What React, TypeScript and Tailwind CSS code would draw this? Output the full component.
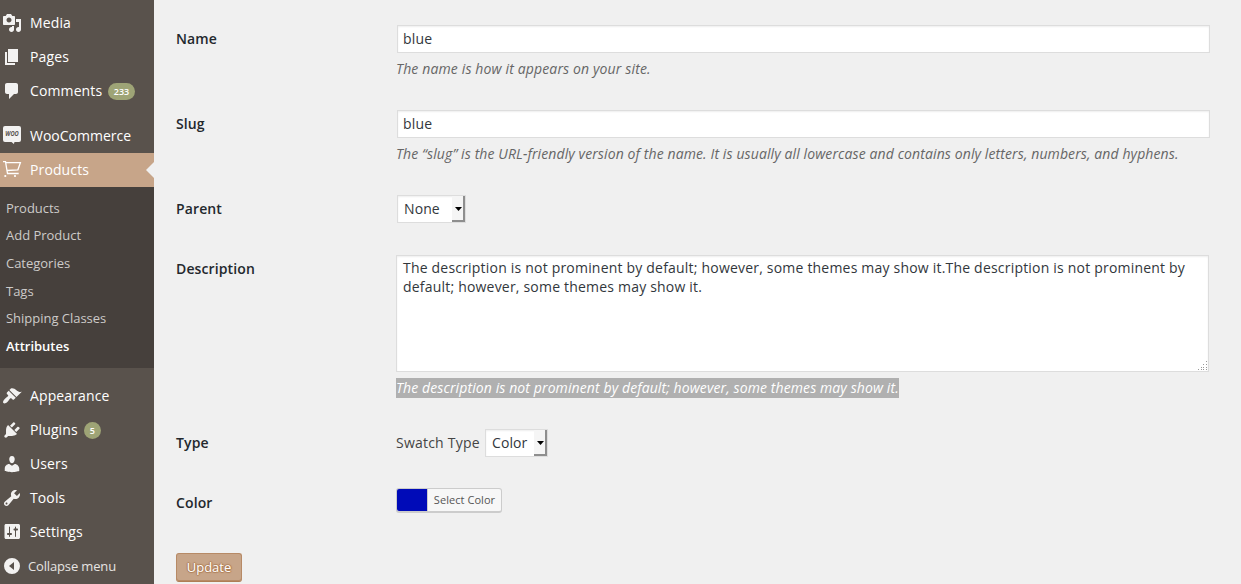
import React from "react";

const paths: Record<string, string> = {
  media:
    "M13 11V4c0-.55-.45-1-1-1h-1.67L9 1H5L3.67 3H2c-.55 0-1 .45-1 1v7c0 .55.45 1 1 1h10c.55 0 1-.45 1-1zM7 4.5c1.38 0 2.5 1.12 2.5 2.5S8.38 9.5 7 9.5 4.5 8.38 4.5 7 5.62 4.5 7 4.5zM14 6h5v10.5c0 1.38-1.12 2.5-2.5 2.5S14 17.88 14 16.5s1.12-2.5 2.5-2.5c.17 0 .34.02.5.05V9h-3V6zm-4 8.05V13h2v3.5c0 1.38-1.12 2.5-2.5 2.5S7 17.88 7 16.5 8.12 14 9.5 14c.17 0 .34.02.5.05z",
  pages: "M6 15V2h10v13H6zm-1 1h8v2H3V5h2v11z",
  comments:
    "M5 2h9c1.1 0 2 .9 2 2v7c0 1.1-.9 2-2 2h-2l-5 5v-5H5c-1.1 0-2-.9-2-2V4c0-1.1.9-2 2-2z",
  appearance:
    "M14.48 11.06L7.41 3.99l1.5-1.5c.5-.56 2.3-.47 3.51.32 1.21.8 1.43 1.28 2.91 2.1 1.18.64 2.45 1.26 4.45.85zm-.71.71L6.7 4.7 4.93 6.47c-.39.39-.39 1.02 0 1.41l1.06 1.06c.39.39.39 1.03 0 1.42-.6.6-1.43 1.11-2.21 1.69-.35.26-.7.53-1.01.84C1.43 14.23.4 16.08 1.4 17.07c.99 1 2.84-.03 4.18-1.36.31-.31.58-.66.85-1.02.57-.78 1.08-1.61 1.69-2.21.39-.39 1.02-.39 1.41 0l1.06 1.06c.39.39 1.02.39 1.41 0z",
  plugins:
    "M13.11 4.36L9.87 7.6 8 5.73l3.24-3.24c.35-.34 1.05-.2 1.56.32.52.51.66 1.21.31 1.55zm-8 1.77l.91-1.12 9.01 9.01-1.19.84c-.71.71-2.63 1.16-3.82 1.16H6.14L4.9 17.26c-.59.59-1.54.59-2.12 0-.59-.58-.59-1.53 0-2.12l1.24-1.24v-3.88c0-1.13.4-3.19 1.09-3.89zm7.26 3.97l3.24-3.24c.34-.35 1.04-.21 1.55.31.52.51.66 1.21.31 1.55l-3.24 3.25z",
  users:
    "M10 9.25c-2.27 0-2.73-3.44-2.73-3.44C7 4.02 7.82 2 9.97 2c2.16 0 2.98 2.02 2.71 3.81 0 0-.41 3.44-2.68 3.44zm0 2.57L12.72 10c2.39 0 4.52 2.33 4.52 4.53v2.49s-3.65 1.13-7.24 1.13c-3.65 0-7.24-1.13-7.24-1.13v-2.49c0-2.25 1.94-4.48 4.47-4.48z",
  tools:
    "M16.68 9.77c-1.34 1.34-3.3 1.67-4.95.99l-5.41 6.52c-.99.99-2.59.99-3.58 0s-.99-2.59 0-3.57l6.52-5.42c-.68-1.65-.35-3.61.99-4.95 1.28-1.28 3.12-1.62 4.72-1.06l-2.89 2.89 2.82 2.82 2.86-2.87c.53 1.58.18 3.39-1.08 4.65zM3.81 16.21c.4.39 1.04.39 1.43 0 .4-.4.4-1.04 0-1.43-.39-.4-1.03-.4-1.43 0-.39.39-.39 1.03 0 1.43z",
  settings:
    "M18 15.5V3.500c0-.8-.7-1.500-1.500-1.500H4c-.8 0-1.500.7-1.500 1.500v12c0 .8.7 1.500 1.500 1.500h12.500c.8 0 1.500-.7 1.500-1.500zM8 11h1c.55 0 1 .45 1 1s-.45 1-1 1H8v1.500c0 .28-.22.5-.5.5s-.5-.22-.5-.5V13H6c-.55 0-1-.45-1-1s.45-1 1-1h1V5c0-.28.22-.5.5-.5s.5.22.5.5V11zm5.500-2.500h-1c-.55 0-1-.45-1-1s.45-1 1-1h.5V5c0-.28.22-.5.5-.5s.5.22.5.5v1.500h1c.55 0 1 .45 1 1s-.45 1-1 1H14V14.500c0 .28-.22.5-.5.5s-.5-.22-.5-.5V8.500z",
  collapse: "M10 2a8 8 0 1 0 0 16 8 8 0 0 0 0-16zM12 6v8l-5-4z",
};

function Icon({ name }: { name: string }) {
  if (name === "woo") {
    return (
      <svg width="20" height="20" viewBox="0 0 20 20" className="shrink-0">
        <path
          d="M3 0h14a2 2 0 0 1 2 2v12a2 2 0 0 1-2 2h-4.500l-.6 2-2.400-2H3a2 2 0 0 1-2-2V2a2 2 0 0 1 2-2z"
          fill="#f3f2f1"
        />
        <text
          x="10"
          y="10.4"
          textAnchor="middle"
          textLength="13.500"
          lengthAdjust="spacingAndGlyphs"
          fontSize="7"
          fontWeight="700"
          fontStyle="italic"
          fontFamily="Open Sans, sans-serif"
          fill="#59524c"
        >
          WOO
        </text>
      </svg>
    );
  }
  if (name === "cart") {
    return (
      <svg width="20" height="20" viewBox="0 0 20 20" fill="none" stroke="#fff" strokeWidth="1.3" className="shrink-0">
        <path d="M1 1.700h2.500l2 11.800h11.200M3.700 2.600h14.700l-2.500 7.200-10.900.7" />
        <circle cx="3.300" cy="16" r="1.100" fill="#fff" stroke="none" />
        <circle cx="13" cy="16" r="1.100" fill="#fff" stroke="none" />
      </svg>
    );
  }
  return (
    <svg width="20" height="20" viewBox="0 0 20 20" className="shrink-0">
      <path d={paths[name]} fill="#f3f2f1" fillRule="evenodd" />
    </svg>
  );
}

function MenuItem({ icon, label, badge, current }: { icon: string; label: string; badge?: string; current?: boolean }) {
  return (
    <div
      className={
        current
          ? "relative flex h-[34px] items-center bg-[#c7a589] pl-[2px] text-white"
          : "flex h-[34px] items-center pl-[2px] text-white"
      }
    >
      <Icon name={icon} />
      <span className={icon === "woo" ? "ml-2 leading-[18px]" : "ml-2 leading-[18px] tracking-[0.12px]"}>{label}</span>
      {badge && (
        <span className="ml-[6px] mt-px flex h-[17px] min-w-[17px] items-center justify-center rounded-full bg-[#9ea476] px-[5.5px] text-[9px] font-semibold">
          {badge}
        </span>
      )}
      {current && (
        <span className="absolute right-0 top-[9px] border-y-8 border-r-8 border-y-transparent border-r-[#f0f0f0]" />
      )}
    </div>
  );
}

const subItems = ["Products", "Add Product", "Categories", "Tags", "Shipping Classes", "Attributes"];

function Sidebar() {
  return (
    <nav className="w-[154px] shrink-0 bg-[#59524c] pt-[6px]">
      <MenuItem icon="media" label="Media" />
      <MenuItem icon="pages" label="Pages" />
      <MenuItem icon="comments" label="Comments" badge="233" />
      <div className="h-[11px]" />
      <MenuItem icon="woo" label="WooCommerce" />
      <MenuItem icon="cart" label="Products" current />
      <ul className="h-[181px] bg-[#46403c] pt-[7.8px] text-[13px] tracking-[-0.02px] text-[#cdcbc9]">
        {subItems.map((s) => (
          <li
            key={s}
            className={
              s === "Attributes"
                ? "flex h-[27.6px] items-center pl-[6px] font-semibold text-white"
                : "flex h-[27.6px] items-center pl-[6px]"
            }
          >
            {s}
          </li>
        ))}
      </ul>
      <div className="h-[11px]" />
      <MenuItem icon="appearance" label="Appearance" />
      <MenuItem icon="plugins" label="Plugins" badge="5" />
      <MenuItem icon="users" label="Users" />
      <MenuItem icon="tools" label="Tools" />
      <MenuItem icon="settings" label="Settings" />
      <div className="flex h-[34px] items-center pl-[2px] text-[13px] text-[#e6e4e2]">
        <Icon name="collapse" />
        <span className="ml-[6px] pt-[2px] tracking-[-0.15px]">Collapse menu</span>
      </div>
    </nav>
  );
}

function Row({ label, className, children }: { label: string; className: string; children: React.ReactNode }) {
  return (
    <div className={`flex pt-[15px] ${className}`}>
      <div className="w-[220px] shrink-0 pt-[5px] font-semibold leading-[18px] tracking-[0.12px] text-[#23282d]">
        {label}
      </div>
      <div className="min-w-0 flex-1">{children}</div>
    </div>
  );
}

function Field({ value }: { value: string }) {
  return (
    <input
      defaultValue={value}
      className="ml-px block h-[28px] w-[813px] border border-[#ddd] bg-white px-[5px] pb-[2px] tracking-[0.2px] text-[#32373c] shadow-[inset_0_1px_2px_rgba(0,0,0,0.07)] outline-none"
    />
  );
}

function Select({ value, className }: { value: string; className: string }) {
  return (
    <div
      className={`flex h-[28px] items-stretch border border-[#ddd] bg-white text-[#32373c] shadow-[inset_0_1px_2px_rgba(0,0,0,0.07)] ${className}`}
    >
      <span className="flex-1 pl-[6px] leading-[26px] tracking-[0.1px]">{value}</span>
      <span className="flex w-[13px] items-center justify-center border-b-2 border-r-2 border-[#8e8e8e] bg-[#f5f5f5] pl-[2px] pt-px">
        <svg width="7" height="4" viewBox="0 0 7 4" className="shrink-0">
          <path d="M0 0h7L3.5 4z" fill="#000" />
        </svg>
      </span>
    </div>
  );
}

export default function App() {
  return (
    <div className="flex h-[584px] w-[1241px] overflow-hidden bg-[#f0f0f0] font-['Open_Sans',sans-serif] text-[14px] text-[#444]">
      <Sidebar />
      <main className="flex-1 pl-[22px] pt-[10px]">
        <Row label="Name" className="h-[85px]">
          <Field value="blue" />
          <p className="mt-[6px] italic leading-[20px] tracking-[0.14px] text-[#666]">
            The name is how it appears on your site.
          </p>
        </Row>
        <Row label="Slug" className="h-[85px]">
          <Field value="blue" />
          <p className="mt-[6px] italic leading-[20px] tracking-[0.11px] text-[#666]">
            The “slug” is the URL-friendly version of the name. It is usually all lowercase and contains only letters,
            numbers, and hyphens.
          </p>
        </Row>
        <Row label="Parent" className="h-[60px]">
          <Select value="None" className="ml-px w-[69px]" />
        </Row>
        <Row label="Description" className="h-[174px]">
          <div className="relative w-[813px]">
            <textarea
              defaultValue="The description is not prominent by default; however, some themes may show it.The description is not prominent by default; however, some themes may show it."
              className="block h-[117px] w-full resize-none border border-[#ddd] bg-white px-[6px] py-[2px] leading-[19px] tracking-[0.2px] text-[#32373c] shadow-[inset_0_1px_2px_rgba(0,0,0,0.07)] outline-none"
            />
            <svg width="10" height="10" viewBox="0 0 10 10" fill="#999" className="absolute bottom-[1px] right-[1px]">
              <path d="M8 0h1v1H8zM5 3h1v1H5zM8 3h1v1H8zM3 6h1v1H3zM5 6h1v1H5zM8 6h1v1H8zM0 8h1v1H0zM3 8h1v1H3zM5 8h1v1H5zM8 8h1v1H8z" />
            </svg>
          </div>
          <p className="mt-[6px] leading-[20px]">
            <span className="inline-block bg-[#b0b0b0] italic tracking-[0.105px] text-white">
              The description is not prominent by default; however, some themes may show it.
            </span>
          </p>
        </Row>
        <Row label="Type" className="h-[60px]">
          <div className="flex items-center">
            <span className="w-[89px] pb-px tracking-[0.22px]">Swatch Type</span>
            <Select value="Color" className="w-[63px]" />
          </div>
        </Row>
        <Row label="Color" className="h-[64px]">
          <button className="-mt-px flex h-[25px] w-[106px] rounded-[3px] border border-b-2 border-[#ccc] bg-[#f7f7f7] text-[11px] text-[#555]">
            <span className="h-full w-[30px] rounded-l-[2px] bg-[#000bb8]" />
            <span className="flex-1 border-l border-[#ccc] text-center leading-[22px] tracking-[0.06px]">
              Select Color
            </span>
          </button>
        </Row>
        <button className="mt-[15px] h-[29px] w-[66px] rounded-[3px] border border-[#b78a66] border-b-[#ae7d55] bg-[#c7a589] text-[13px] text-white shadow-[inset_0_-1px_0_#b78a66] [text-shadow:0_-1px_1px_#ae7d55,1px_0_1px_#ae7d55,0_1px_1px_#ae7d55,-1px_0_1px_#ae7d55]">
          Update
        </button>
      </main>
    </div>
  );
}
